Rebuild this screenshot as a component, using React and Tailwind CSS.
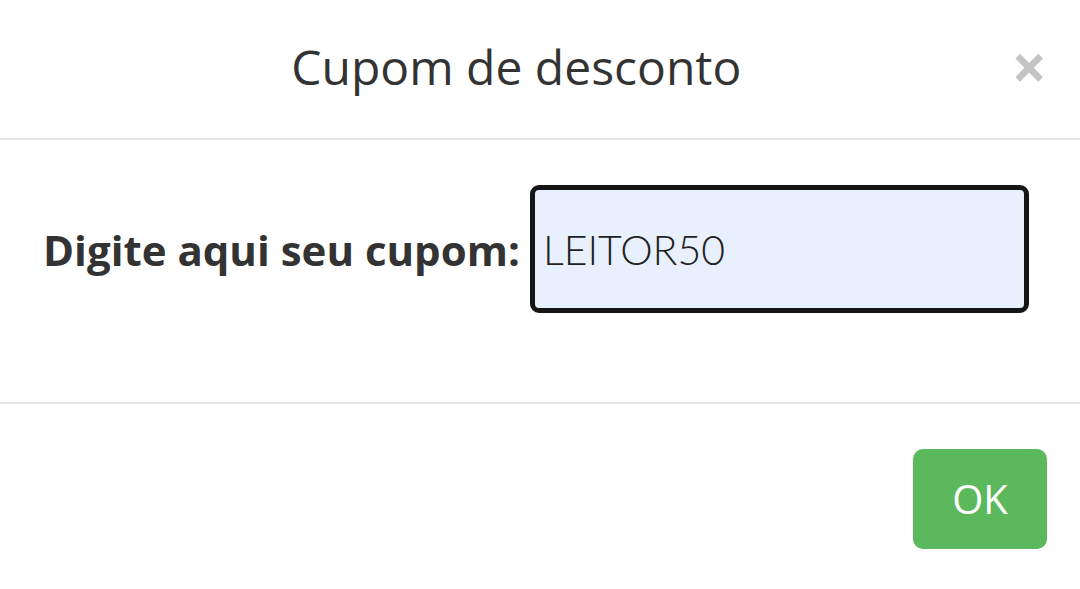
export default function App() {
  return (
    <div className="w-full h-[589px] bg-white flex flex-col text-[#333] font-['Open_Sans',sans-serif]">
      {/* cabeçalho */}
      <div className="h-[140px] shrink-0 flex items-center pl-[21px] pr-[33px] border-b-2 border-[#e5e5e5]">
        <h4 className="flex-1 text-center text-[48px] leading-none pb-[4px]">Cupom de desconto</h4>
        <button className="text-[#c4c4c4] text-[62px] font-bold leading-none pb-[6px]">×</button>
      </div>

      {/* corpo */}
      <div className="h-[264px] shrink-0 flex items-center pl-[43px] gap-[10px] pb-[44px] border-b-2 border-[#e5e5e5]">
        <label className="text-[42px] font-bold whitespace-nowrap">Digite aqui seu cupom:</label>
        <input
          type="text"
          defaultValue="LEITOR50"
          className="w-[499px] h-[128px] bg-[#e8f0fe] border-[5px] border-[#151515] rounded-[9px] px-[8px] text-[41px] font-light text-[#222] font-['Lato',sans-serif] outline-none"
        />
      </div>

      {/* rodapé */}
      <div className="flex justify-end pt-[45px] pr-[33px]">
        <button className="w-[134px] h-[100px] bg-[#5cb85c] rounded-[10px] text-white text-[40px] leading-none">OK</button>
      </div>
    </div>
  )
}
